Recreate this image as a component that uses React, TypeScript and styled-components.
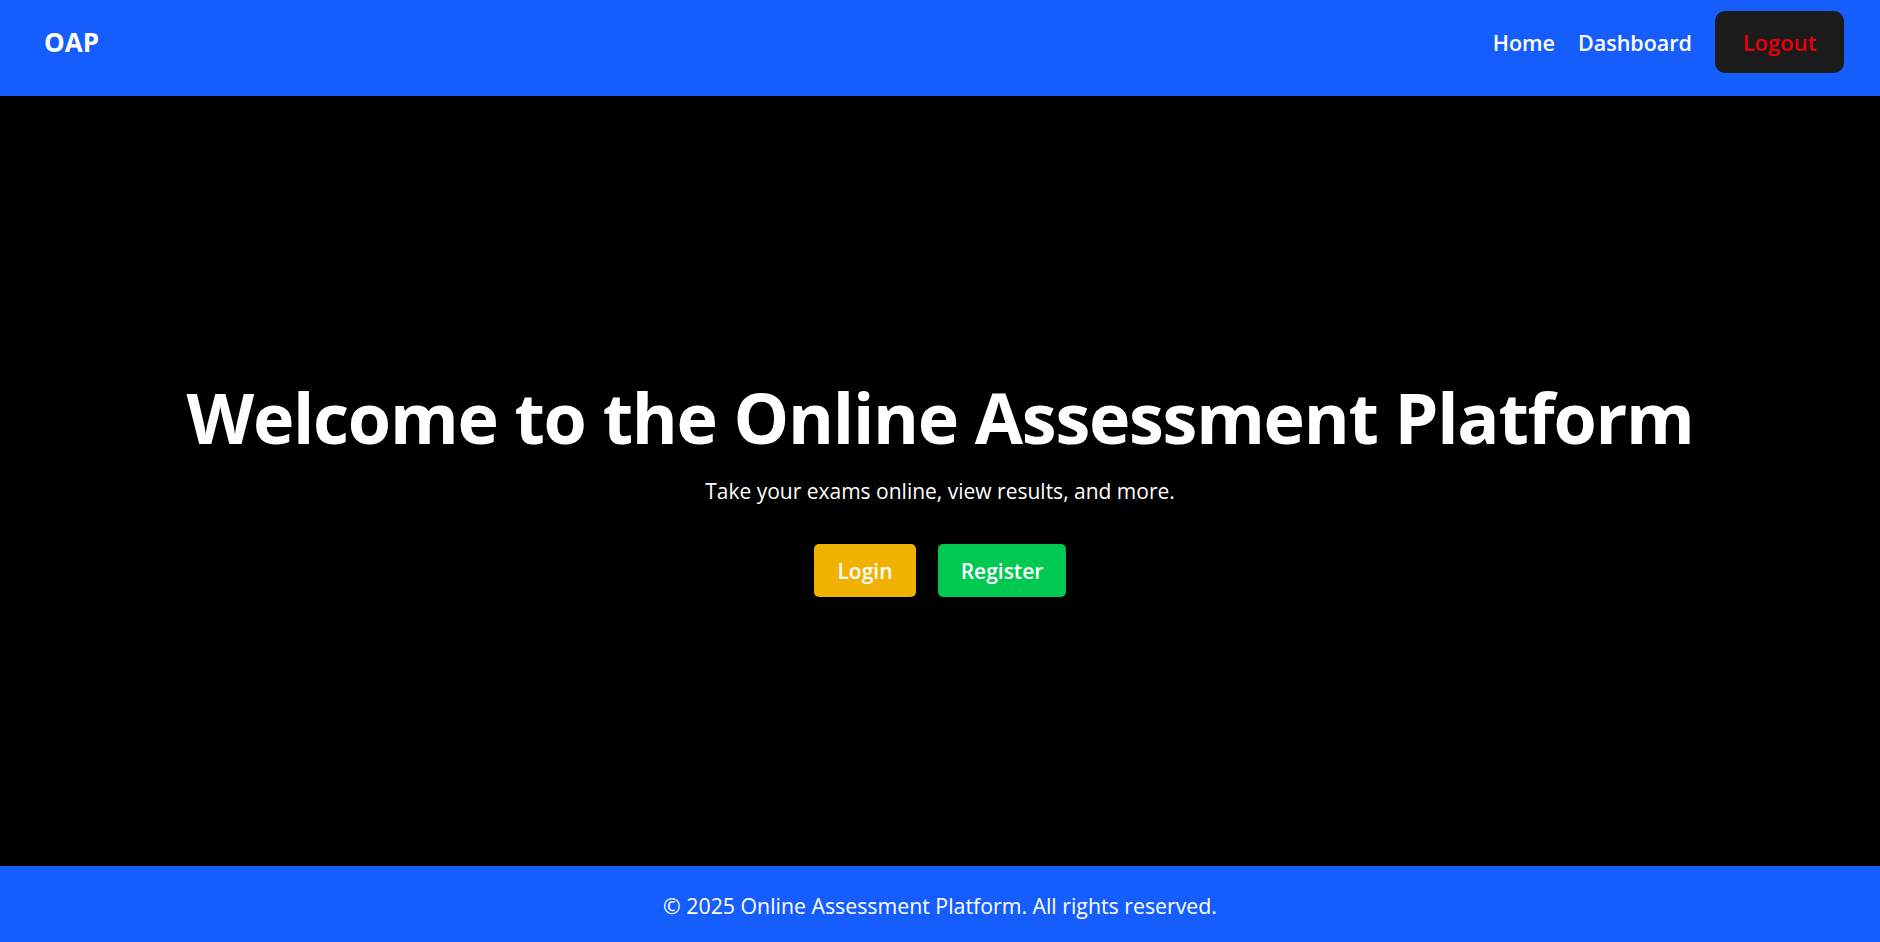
import React from "react";
import styled, { createGlobalStyle } from "styled-components";

const GlobalStyle = createGlobalStyle`
  html, body { margin: 0; padding: 0; background: #000; }
  body { font-family: "Open Sans", "Noto Sans", sans-serif; }
  * { box-sizing: border-box; }
`;

const Page = styled.div`
  display: flex;
  flex-direction: column;
  height: 942px;
  background: #000;
  color: #fff;
`;

const Header = styled.header`
  height: 96px;
  flex: none;
  background: #155dfc;
  display: flex;
  align-items: flex-start;
  justify-content: space-between;
  padding: 11px 36px 0 44px;
`;

const Logo = styled.div`
  height: 62px;
  display: flex;
  align-items: center;
  font-size: 26px;
  font-weight: 700;
`;

const Nav = styled.nav`
  display: flex;
  align-items: center;
  gap: 23px;
  height: 62px;
`;

const NavLink = styled.a`
  color: #fff;
  font-size: 21.5px;
  font-weight: 600;
  text-decoration: none;
`;

const LogoutButton = styled.button`
  width: 129px;
  height: 62px;
  padding: 0;
  border: none;
  border-radius: 10px;
  background: #1b1b1b;
  color: #e7000b;
  font-family: inherit;
  font-size: 22px;
  font-weight: 600;
`;

const Hero = styled.main`
  flex: 1;
  display: flex;
  flex-direction: column;
  align-items: center;
  justify-content: center;
  padding-top: 10px;
`;

const Title = styled.h1`
  margin: 0;
  font-size: 70px;
  font-weight: 700;
  letter-spacing: -1.25px;
  line-height: 1.2;
`;

const Subtitle = styled.p`
  margin: 18px 0 0;
  font-size: 21px;
  line-height: 1.4;
`;

const Actions = styled.div`
  display: flex;
  gap: 22px;
  margin-top: 38px;
`;

const ActionButton = styled.a<{ $bg: string; $w: number }>`
  width: ${(p) => p.$w}px;
  height: 53px;
  display: flex;
  align-items: center;
  justify-content: center;
  border-radius: 5px;
  background: ${(p) => p.$bg};
  color: #fff;
  font-size: 21px;
  font-weight: 600;
  text-decoration: none;
`;

const Footer = styled.footer`
  height: 76px;
  flex: none;
  background: #155dfc;
  display: flex;
  align-items: center;
  justify-content: center;
  padding-top: 2px;
  font-size: 21.3px;
`;

export default function App() {
  return (
    <>
      <GlobalStyle />
      <Page>
        <Header>
          <Logo>OAP</Logo>
          <Nav>
            <NavLink href="#">Home</NavLink>
            <NavLink href="#">Dashboard</NavLink>
            <LogoutButton>Logout</LogoutButton>
          </Nav>
        </Header>
        <Hero>
          <Title>Welcome to the Online Assessment Platform</Title>
          <Subtitle>Take your exams online, view results, and more.</Subtitle>
          <Actions>
            <ActionButton href="#" $bg="#f0b100" $w={102}>Login</ActionButton>
            <ActionButton href="#" $bg="#00c951" $w={128}>Register</ActionButton>
          </Actions>
        </Hero>
        <Footer>© 2025 Online Assessment Platform. All rights reserved.</Footer>
      </Page>
    </>
  );
}
